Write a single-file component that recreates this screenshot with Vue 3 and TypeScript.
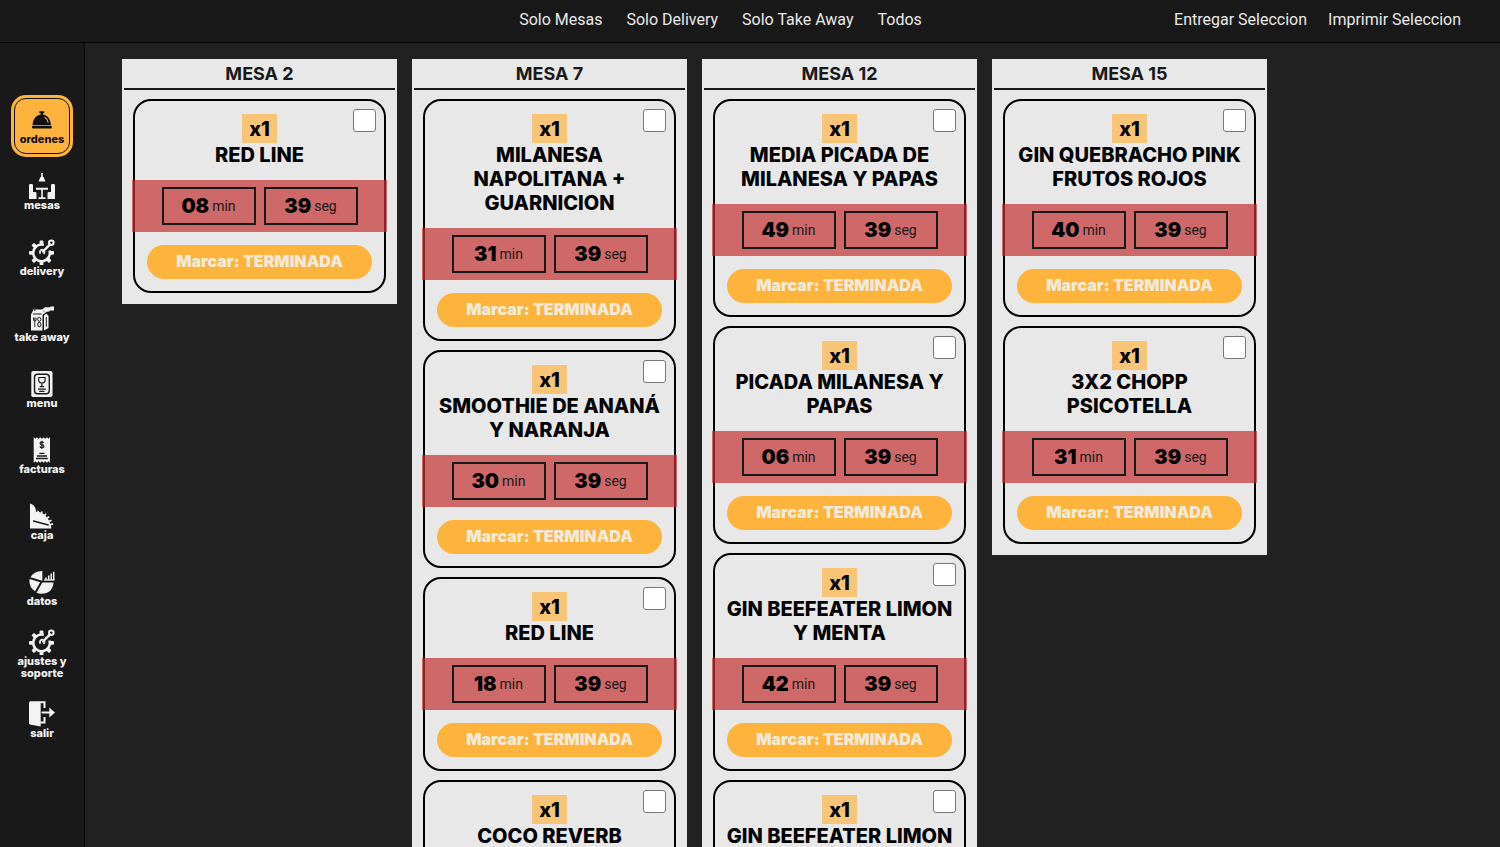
<script setup lang="ts">
interface Order {
  id: number
  qty: number
  name: string
  min: string
  seg: string
}

interface Table {
  id: number
  orders: Order[]
}

interface MenuItem {
  icon: string
  label: string
  active?: boolean
}

const filters: string[] = ['Solo Mesas', 'Solo Delivery', 'Solo Take Away', 'Todos']
const actions: string[] = ['Entregar Seleccion', 'Imprimir Seleccion']

const menu: MenuItem[] = [
  { icon: 'bell', label: 'ordenes', active: true },
  { icon: 'tables', label: 'mesas' },
  { icon: 'gear', label: 'delivery' },
  { icon: 'bag', label: 'take away' },
  { icon: 'card', label: 'menu' },
  { icon: 'bill', label: 'facturas' },
  { icon: 'cash', label: 'caja' },
  { icon: 'pie', label: 'datos' },
  { icon: 'gear', label: 'ajustes y\nsoporte' },
  { icon: 'exit', label: 'salir' },
]

const tables: Table[] = [
  { id: 2, orders: [{ id: 1, qty: 1, name: 'RED LINE', min: '08', seg: '39' }] },
  {
    id: 7,
    orders: [
      { id: 2, qty: 1, name: 'MILANESA\nNAPOLITANA +\nGUARNICION', min: '31', seg: '39' },
      { id: 3, qty: 1, name: 'SMOOTHIE DE ANANÁ\nY NARANJA', min: '30', seg: '39' },
      { id: 4, qty: 1, name: 'RED LINE', min: '18', seg: '39' },
      { id: 5, qty: 1, name: 'COCO REVERB', min: '18', seg: '39' },
    ],
  },
  {
    id: 12,
    orders: [
      { id: 6, qty: 1, name: 'MEDIA PICADA DE\nMILANESA Y PAPAS', min: '49', seg: '39' },
      { id: 7, qty: 1, name: 'PICADA MILANESA Y\nPAPAS', min: '06', seg: '39' },
      { id: 8, qty: 1, name: 'GIN BEEFEATER LIMON\nY MENTA', min: '42', seg: '39' },
      { id: 9, qty: 1, name: 'GIN BEEFEATER LIMON\nY MENTA', min: '42', seg: '39' },
    ],
  },
  {
    id: 15,
    orders: [
      { id: 10, qty: 1, name: 'GIN QUEBRACHO PINK\nFRUTOS ROJOS', min: '40', seg: '39' },
      { id: 11, qty: 1, name: '3X2 CHOPP\nPSICOTELLA', min: '31', seg: '39' },
    ],
  },
]

const teeth: number[] = [0, 45, 90, 135, 180, 225, 270]
</script>

<template>
  <div class="app">
    <header class="topbar">
      <nav class="filters">
        <button v-for="f in filters" :key="f" type="button" class="link">{{ f }}</button>
      </nav>
      <div class="actions">
        <button v-for="a in actions" :key="a" type="button" class="link">{{ a }}</button>
      </div>
    </header>

    <div class="body">
      <nav class="sidebar">
        <a v-for="item in menu" :key="item.label" href="#" class="item" :class="{ active: item.active }">
          <svg class="icon" viewBox="0 0 26 26" aria-hidden="true">
            <template v-if="item.icon === 'bell'">
              <path d="M10.4 4.2h4.8v2h-1.300v1.300c5 .7 7.700 5 8 10.500H3.600c.3-5.500 3-9.800 8.100-10.500V6.200h-1.300z" fill="#111" />
              <rect x="3" y="18.800" width="19.800" height="2.700" rx="1" fill="#111" />
              <path d="M16 10.500c1.700 1 2.700 2.700 3 4.700" fill="none" stroke="#fdb33c" stroke-width="1.100" stroke-linecap="round" />
            </template>
            <template v-else-if="item.icon === 'tables'">
              <path d="M12.200 0h1.600v3.600l1 .8 1.700 4.100H9.500l1.700-4.100 1-.8z" />
              <path d="M0 12.300q0-1.300 1.300-1.300h1.400Q4 11 4 12.300V19h2.200q1.300 0 1.300 1.300V26H0z" />
              <path d="M26 12.300q0-1.300-1.300-1.300h-1.400Q22 11 22 12.300V19h-2.200q-1.300 0-1.300 1.300V26H26z" />
              <path d="M7 14.800h12v1.900h-5.200v7.500h2.700V26h-7v-1.800h2.700v-7.500H7z" />
            </template>
            <template v-else-if="item.icon === 'gear'">
              <path d="M14.800 5.900A8.300 8.300 0 1 0 20.500 11.500" fill="none" stroke="#f3f3f3" stroke-width="2.500" />
              <rect v-for="t in teeth" :key="t" x="21" y="12" width="4" height="3.800" rx="1" :transform="`rotate(${t} 12.500 13.900)`" />
              <path d="M14 12.500 21 5.400" stroke="#f3f3f3" stroke-width="2.400" stroke-linecap="round" />
              <path d="M14.700 11.700A2.300 2.300 0 1 0 14.400 14.700" fill="none" stroke="#f3f3f3" stroke-width="1.700" transform="rotate(90 13 13.200)" />
              <circle cx="22.300" cy="3.800" r="2.300" fill="none" stroke="#f3f3f3" stroke-width="2" />
            </template>
            <template v-else-if="item.icon === 'bag'">
              <path d="M2 9.500 4.500 4.500h9l2 3.500-2 2v15.500H2z" />
              <path d="M15 10.500 17.300 8.500 19.500 11v12l-4.500 2.500z" />
              <path d="M11.500 6 16 2.300h5.500V1.500H25v4h-3.500l-2.200 1.200-2 .1-1.500 1.800-1.400-.7 1.200-2.100z" />
              <path d="M4 9h8.500M5.800 4.300v1.800M17.300 12v9.500" stroke="#191919" stroke-width="1" />
              <path d="M4.500 12.500v2.800q1.300 1.500 2.600 0v-2.800M5.800 12.500v9.500" fill="none" stroke="#191919" stroke-width=".9" />
              <ellipse cx="10.300" cy="14.300" rx="1.600" ry="2" fill="none" stroke="#191919" stroke-width="1" />
              <ellipse cx="10.300" cy="19.500" rx="1.600" ry="2.300" fill="none" stroke="#191919" stroke-width="1" />
            </template>
            <template v-else-if="item.icon === 'card'">
              <rect x="2.300" y="0" width="21.200" height="26" rx="1.800" />
              <rect x="5.500" y="3.200" width="14.800" height="19.600" rx="3" fill="none" stroke="#191919" stroke-width="1.400" />
              <path d="M9.800 6.500h6.200q1 5.500-3.100 5.500T9.800 6.500zM12.900 12v3.200M10.700 15.600h4.400M9 18.200h7.800M10.300 20.300h5.200" fill="none" stroke="#191919" stroke-width="1.200" />
            </template>
            <template v-else-if="item.icon === 'bill'">
              <path d="M4.700 0l1.600 1.700L8 .3l1.600 1.400L11.300.3 13 1.700 14.700.3l1.600 1.400L18 .3l1.600 1.400L21 0v26l-1.400-1.700L18 25.700l-1.700-1.400-1.600 1.400-1.700-1.400-1.700 1.400-1.700-1.400L8 25.700l-1.700-1.400L4.700 26z" />
              <path d="M14.700 6q-.4-1.200-1.900-1.200-1.700 0-1.700 1.400t1.800 1.500q1.900.2 1.900 1.600t-1.900 1.400q-1.600 0-2-1.200M12.900 3.700v8.200" fill="none" stroke="#191919" stroke-width="1.200" />
              <path d="M10.300 16.300h5.200M8 19h10M7 21.500h11.800" stroke="#191919" stroke-width="1.300" />
            </template>
            <template v-else-if="item.icon === 'cash'">
              <path d="M1 .5Q5 1.500 6.600 5.500L7 8.800Q12 8.300 16.500 12.800T22.500 25.500H1z" />
              <path d="M8.800 9.500 9.300 7.700M12.300 10.500 13.200 8.500M15.500 12.500 17 10.800M18 15.500 20 13.700M20 18.500 22.500 17.200M21 21.700 24 20.900" stroke="#f3f3f3" stroke-width="1.700" />
              <path d="M4.500 18l14.800 4" stroke="#191919" stroke-width="1.300" stroke-linecap="round" />
            </template>
            <template v-else-if="item.icon === 'pie'">
              <path d="M13.300 2v9.700L1.500 8.300Q4.300 2.300 13.300 2z" />
              <path d="M.6 10l10.600 3.200L6 22.300Q-.5 18 .6 10z" />
              <path d="M13.300 13.500H24.500Q23.500 24.700 12.500 24.700q-2.700 0-5-1z" />
              <path d="M15 11h10.500" stroke="#f3f3f3" stroke-width="1.300" />
              <path d="M17 8.500v2.500M19.700 6.500V11M22.200 4.500V11M24.700 2.800V11" stroke="#f3f3f3" stroke-width="1.500" />
            </template>
            <template v-else>
              <path d="M10 1.300h5.500V7M15.500 16v5.500h-5" fill="none" stroke="#f3f3f3" stroke-width="2" />
              <path d="M0 2Q0 .3 1.700.3H10q1.700 1.200 1.700 3V25.500L1 23.500Q0 23.200 0 22.200z" />
              <path d="M13.500 11.500h8" stroke="#f3f3f3" stroke-width="2.200" stroke-linecap="round" />
              <path d="M20.300 6.500 26 11.500l-5.700 5z" />
            </template>
          </svg>
          <span class="label">{{ item.label }}</span>
        </a>
      </nav>

      <main class="board">
        <section v-for="table in tables" :key="table.id" class="column">
          <h2 class="column-title">MESA {{ table.id }}</h2>
          <article v-for="order in table.orders" :key="order.id" class="card">
            <input type="checkbox" class="pick" :aria-label="order.name" />
            <span class="qty">x{{ order.qty }}</span>
            <h3 class="name">{{ order.name }}</h3>
            <div class="timer">
              <div class="time"><strong>{{ order.min }}</strong><span>min</span></div>
              <div class="time"><strong>{{ order.seg }}</strong><span>seg</span></div>
            </div>
            <button type="button" class="done">Marcar: TERMINADA</button>
          </article>
        </section>
      </main>
    </div>
  </div>
</template>

<style>
body {
  margin: 0;
  background: #212121;
}
</style>

<style scoped>
.app {
  display: flex;
  flex-direction: column;
  height: 100vh;
  overflow: hidden;
  background: #212121;
  font-family: Inter, "Liberation Sans", sans-serif;
}

.app * {
  box-sizing: border-box;
}

button {
  border: 0;
  font-family: inherit;
  cursor: pointer;
}

.topbar {
  display: grid;
  grid-template-columns: 1fr auto 1fr;
  align-items: center;
  flex: none;
  height: 43px;
  padding: 0 39px 2px 0;
  border-bottom: 1px solid #000;
  background: #191919;
}

.filters {
  display: flex;
  grid-column: 2;
  gap: 24px;
  margin-right: 20px;
}

.actions {
  display: flex;
  justify-content: flex-end;
  gap: 21px;
}

.link {
  padding: 0;
  background: none;
  color: #e9e9e9;
  font-family: Roboto, "Liberation Sans", sans-serif;
  font-size: 16px;
  line-height: 20px;
  white-space: nowrap;
}

.body {
  display: flex;
  flex: 1;
  min-height: 0;
}

.sidebar {
  display: flex;
  flex-direction: column;
  align-items: center;
  flex: none;
  gap: 4px;
  width: 85px;
  padding-top: 52px;
  border-right: 1px solid #000;
  background: #191919;
}

.item {
  position: relative;
  display: flex;
  flex-direction: column;
  align-items: center;
  justify-content: center;
  flex: none;
  width: 62px;
  height: 62px;
  border-radius: 15px;
  color: #f3f3f3;
  text-decoration: none;
}

.item.active {
  background: #fdb33c;
  color: #111;
}

.item.active::before {
  content: "";
  position: absolute;
  inset: 3px;
  border: 1px solid #111;
  border-radius: 12px;
}

.icon {
  flex: none;
  width: 26px;
  height: 26px;
  fill: #f3f3f3;
}

.label {
  font-size: 11px;
  font-weight: 800;
  line-height: 12px;
  text-align: center;
  white-space: pre;
}

.board {
  display: flex;
  align-items: flex-start;
  flex: 1;
  gap: 15px;
  min-width: 0;
  padding: 16px 0 0 37px;
}

.column {
  display: flex;
  flex-direction: column;
  flex: none;
  gap: 9px;
  width: 275px;
  padding: 0 11px 11px;
  background: #e8e8e8;
}

.column-title {
  margin: 0 -9px;
  padding: 3px 0 2px;
  border-bottom: 2px solid #191919;
  color: #191919;
  font-size: 18px;
  font-weight: 700;
  line-height: 24px;
  text-align: center;
}

.card {
  position: relative;
  display: flex;
  flex-direction: column;
  align-items: center;
  padding: 13px 12px 12px;
  border: 2px solid #000;
  border-radius: 18px;
}

.pick {
  position: absolute;
  top: 8px;
  right: 8px;
  width: 23px;
  height: 23px;
  margin: 0;
  appearance: none;
  border: 1px solid #767676;
  border-radius: 3px;
  background: #fff;
}

.qty {
  padding: 1px 7px 0;
  background: #f8c475;
  color: #000;
  font-size: 20px;
  font-weight: 800;
  line-height: 28px;
}

.name {
  margin: 0 0 13px;
  color: #000;
  font-size: 20px;
  font-weight: 800;
  line-height: 24px;
  text-align: center;
  white-space: pre;
}

.timer {
  position: relative;
  display: flex;
  align-self: stretch;
  justify-content: center;
  gap: 8px;
  margin: 0 -15px 13px;
  padding: 7px 0;
  background: rgba(197, 50, 50, 0.7);
}

.time {
  display: flex;
  align-items: center;
  justify-content: center;
  gap: 3px;
  width: 94px;
  height: 38px;
  border: 2px solid #191919;
  color: #191919;
  font-family: Roboto, "Liberation Sans", sans-serif;
  font-size: 14px;
}

.time strong {
  color: #000;
  font-family: Inter, "Liberation Sans", sans-serif;
  font-size: 20px;
  font-weight: 900;
}

.done {
  align-self: stretch;
  height: 34px;
  padding: 0 0 2px;
  border-radius: 17px;
  background: #fdb33c;
  color: #f1eadb;
  font-size: 16px;
  font-weight: 900;
}
</style>
